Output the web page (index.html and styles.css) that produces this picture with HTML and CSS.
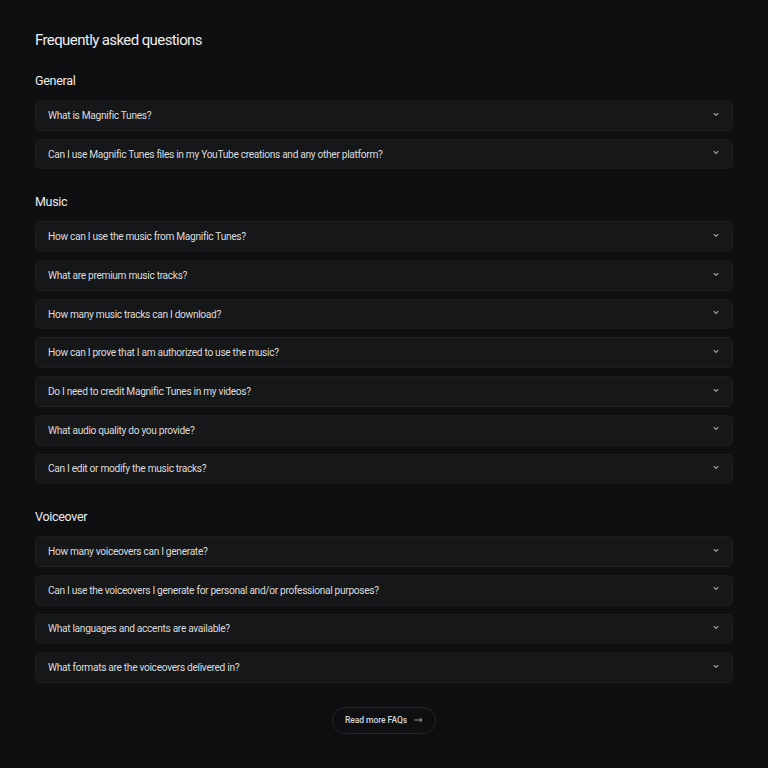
FILE: index.html
```html
<!DOCTYPE html>
<html>
<head>
<meta charset="utf-8">
<link rel="stylesheet" href="styles.css">
</head>
<body>
<main class="faq">
  <h1 class="faq-title">Frequently asked questions</h1>

  <section class="group">
    <h2 class="group-title">General</h2>
    <div class="list">
      <div class="item"><span>What is Magnific Tunes?</span><svg class="chev" viewBox="0 0 8 5"><path d="M1 1l3 3 3-3"/></svg></div>
      <div class="item"><span>Can I use Magnific Tunes files in my YouTube creations and any other platform?</span><svg class="chev" viewBox="0 0 8 5"><path d="M1 1l3 3 3-3"/></svg></div>
    </div>
  </section>

  <section class="group">
    <h2 class="group-title">Music</h2>
    <div class="list">
      <div class="item"><span>How can I use the music from Magnific Tunes?</span><svg class="chev" viewBox="0 0 8 5"><path d="M1 1l3 3 3-3"/></svg></div>
      <div class="item"><span>What are premium music tracks?</span><svg class="chev" viewBox="0 0 8 5"><path d="M1 1l3 3 3-3"/></svg></div>
      <div class="item"><span>How many music tracks can I download?</span><svg class="chev" viewBox="0 0 8 5"><path d="M1 1l3 3 3-3"/></svg></div>
      <div class="item"><span>How can I prove that I am authorized to use the music?</span><svg class="chev" viewBox="0 0 8 5"><path d="M1 1l3 3 3-3"/></svg></div>
      <div class="item"><span>Do I need to credit Magnific Tunes in my videos?</span><svg class="chev" viewBox="0 0 8 5"><path d="M1 1l3 3 3-3"/></svg></div>
      <div class="item"><span>What audio quality do you provide?</span><svg class="chev" viewBox="0 0 8 5"><path d="M1 1l3 3 3-3"/></svg></div>
      <div class="item"><span>Can I edit or modify the music tracks?</span><svg class="chev" viewBox="0 0 8 5"><path d="M1 1l3 3 3-3"/></svg></div>
    </div>
  </section>

  <section class="group">
    <h2 class="group-title">Voiceover</h2>
    <div class="list">
      <div class="item"><span>How many voiceovers can I generate?</span><svg class="chev" viewBox="0 0 8 5"><path d="M1 1l3 3 3-3"/></svg></div>
      <div class="item"><span>Can I use the voiceovers I generate for personal and/or professional purposes?</span><svg class="chev" viewBox="0 0 8 5"><path d="M1 1l3 3 3-3"/></svg></div>
      <div class="item"><span>What languages and accents are available?</span><svg class="chev" viewBox="0 0 8 5"><path d="M1 1l3 3 3-3"/></svg></div>
      <div class="item"><span>What formats are the voiceovers delivered in?</span><svg class="chev" viewBox="0 0 8 5"><path d="M1 1l3 3 3-3"/></svg></div>
    </div>
  </section>

  <div class="more-wrap">
    <a class="more" href="#">Read more FAQs <svg class="arrow" viewBox="0 0 12 8"><path d="M0.5 4h10M7.5 1l3 3-3 3"/></svg></a>
  </div>
</main>
</body>
</html>
```

FILE: styles.css
```css
* { box-sizing: border-box; }
html, body { margin: 0; padding: 0; background: #0e0f11; }
body {
  font-family: Roboto, "Noto Sans", sans-serif;
  color: #e6e6e8;
}
.faq {
  padding: 30px 35px 0 35px;
}
.faq-title {
  margin: 0;
  font-size: 15px;
  line-height: 20px;
  font-weight: 400;
  letter-spacing: -0.6px;
  color: #ececee;
}
.group { margin-top: 24px; }
.group:first-of-type { margin-top: 22px; }
.group-title {
  margin: 0 0 10px 0;
  font-size: 12.5px;
  line-height: 18px;
  font-weight: 400;
  letter-spacing: -0.3px;
  color: #ececee;
}
.list {
  display: flex;
  flex-direction: column;
  gap: 8px;
}
.item {
  height: 30.7px;
  display: flex;
  align-items: center;
  justify-content: space-between;
  padding: 0 13px 0 12px;
  background: #161719;
  border: 1px solid #1c1d20;
  border-radius: 5px;
  font-size: 10.2px;
  letter-spacing: -0.32px;
  color: #dcdcde;
}
.chev {
  width: 6px;
  height: 4.5px;
  fill: none;
  stroke: #a8a8ac;
  stroke-width: 1.5;
  margin-top: -3px;
}
.more-wrap {
  display: flex;
  justify-content: center;
  margin-top: 24px;
}
.more {
  display: inline-flex;
  align-items: center;
  gap: 7px;
  height: 27px;
  padding: 0 12px 0 12px;
  border: 1px solid #26272a;
  border-radius: 14px;
  color: #d6d6d8;
  text-decoration: none;
  font-size: 8.6px;
  font-weight: 500;
  letter-spacing: -0.1px;
}
.arrow {
  width: 9px;
  height: 6px;
  fill: none;
  stroke: #d6d6d8;
  stroke-width: 1;
}
```
